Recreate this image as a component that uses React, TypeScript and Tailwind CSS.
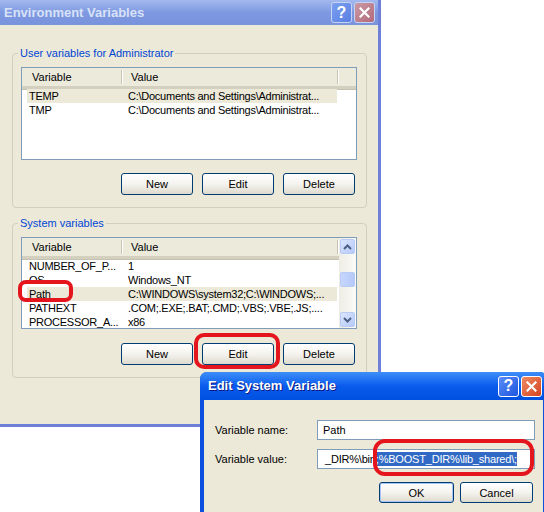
import React from 'react';
import { clsx, type ClassValue } from 'clsx';
import { twMerge } from 'tailwind-merge';

function cn(...inputs: ClassValue[]) {
  return twMerge(clsx(inputs));
}

type Row = { name: string; value: string };

const userRows: Row[] = [
  { name: 'TEMP', value: 'C:\\Documents and Settings\\Administrat...' },
  { name: 'TMP', value: 'C:\\Documents and Settings\\Administrat...' },
];

const systemRows: Row[] = [
  { name: 'NUMBER_OF_P...', value: '1' },
  { name: 'OS', value: 'Windows_NT' },
  { name: 'Path', value: 'C:\\WINDOWS\\system32;C:\\WINDOWS;...' },
  { name: 'PATHEXT', value: '.COM;.EXE;.BAT;.CMD;.VBS;.VBE;.JS;....' },
  { name: 'PROCESSOR_A...', value: 'x86' },
];

export default function App() {
  return (
    <div className="relative w-[544px] h-[512px] overflow-hidden bg-white text-[11px] leading-[14px] text-black font-['Liberation_Sans',Arial,sans-serif]">
      {/* Environment Variables (inactive) */}
      <div className="absolute left-0 top-0 w-[381px] h-[427px] flex flex-col bg-[#ece9d8] border-r-[3px] border-b-[3px] border-[#6f80d8]">
        <div className="h-[25px] shrink-0 flex items-center bg-linear-to-b from-[#a3b9ee] via-[#7e99e1] to-[#7893dd] pl-[4px] pr-[3px]">
          <span className="flex-1 text-[13px] font-bold text-[#d8e2f7]">Environment Variables</span>
          <div className="flex gap-[2px]">
            <TitleButton kind="help" active={false} />
            <TitleButton kind="close" active={false} />
          </div>
        </div>

        <div className="flex-1 flex flex-col pl-[12px] pr-[11px] pt-[22px]">
          <GroupBox title="User variables for Administrator">
            <ListView rows={userRows} selected={0} className="h-[93px] mt-[7px]" />
            <ButtonRow className="mt-[13px] mb-[12px]" />
          </GroupBox>

          <GroupBox title="System variables" className="mt-[9px]">
            <ListView rows={systemRows} selected={2} scroll className="h-[92px] mt-[7px]" />
            <ButtonRow className="mt-[14px] mb-[12px]" />
          </GroupBox>
        </div>
      </div>

      {/* Edit System Variable (active) */}
      <div className="absolute left-[200px] top-[372px] w-[347px] h-[142px] flex flex-col bg-[#0a4fde] rounded-t-[7px] overflow-hidden">
        <div className="h-[28px] shrink-0 flex items-center bg-linear-to-b from-[#3d8ef8] via-[#0a5bee] to-[#0051e0] pl-[8px] pr-[5px]">
          <span className="flex-1 text-[13px] font-bold text-white [text-shadow:1px_1px_0_#0a1883]">Edit System Variable</span>
          <div className="flex gap-[2px]">
            <TitleButton kind="help" active />
            <TitleButton kind="close" active />
          </div>
        </div>
        <div className="flex-1 mx-[4px] bg-[#ece9d8] pl-[11px] pr-[8px] pt-[20px] flex flex-col">
          <div className="flex items-center h-[20px]">
            <span className="w-[102px]">Variable name:</span>
            <div className="w-[218px] h-[20px] border border-[#7f9db9] bg-white flex items-center pl-[5px]">Path</div>
          </div>
          <div className="flex items-center h-[20px] mt-[9px]">
            <span className="w-[102px]">Variable value:</span>
            <div className="w-[218px] h-[20px] border border-[#7f9db9] bg-white flex items-center pl-[7px] overflow-hidden whitespace-nowrap tracking-[-0.2px]">
              <span className="shrink-0">_DIR%\bin</span>
              <span className="shrink-0 bg-[#316ac5] text-white">;%BOOST_DIR%\lib_shared\;</span>
            </div>
          </div>
          <div className="flex justify-end gap-[6px] mt-[13px] pr-[2px]">
            <XpButton label="OK" className="w-[75px] h-[21px]" focused />
            <XpButton label="Cancel" className="w-[73px] h-[21px]" />
          </div>
        </div>
      </div>

      {/* red annotations */}
      <div className="absolute left-[18px] top-[280px] w-[55px] h-[22px] border-[4px] border-[#e5151d] rounded-[8px]" />
      <div className="absolute left-[194px] top-[333px] w-[86px] h-[36px] border-[4px] border-[#e5151d] rounded-[10px]" />
      <div className="absolute left-[373px] top-[439px] w-[161px] h-[37px] border-[4px] border-[#e5151d] rounded-[12px]" />
    </div>
  );
}

function GroupBox({ title, children, className }: { title: string; children: React.ReactNode; className?: string }) {
  return (
    <fieldset className={cn('border border-[#d0d0bf] rounded-[4px] px-[8px] flex flex-col', className)}>
      <legend className="ml-[-3px] px-[2px] leading-[13px] text-[#0046d5]">{title}</legend>
      {children}
    </fieldset>
  );
}

function ListView({ rows, selected, scroll, className }: { rows: Row[]; selected: number; scroll?: boolean; className?: string }) {
  return (
    <div className={cn('w-[336px] border border-[#7f9db9] bg-white flex overflow-hidden', className)}>
      <div className="flex-1 min-w-0 flex flex-col">
        <div className="h-[21px] shrink-0 flex items-center bg-[#ebeadb] border-b-[3px] border-[#d4d0c0] shadow-[0_1px_0_#c5c1b1]">
          <span className="w-[99px] pl-[10px]">Variable</span>
          <HeaderDivider />
          <span className="w-[214px] pl-[8px]">Value</span>
          <HeaderDivider />
          <span className="flex-1" />
        </div>
        {rows.map((r, i) => (
          <div
            key={r.name}
            className={cn(
              'ml-[5px] w-[310px] h-[14px] flex items-center whitespace-nowrap tracking-[-0.25px]',
              i === selected && 'bg-[#ece9d8]'
            )}
          >
            <span className="w-[101px] pl-[2px] overflow-hidden">{r.name}</span>
            <span className="flex-1 overflow-hidden">{r.value}</span>
          </div>
        ))}
      </div>
      {scroll && <Scrollbar />}
    </div>
  );
}

function HeaderDivider() {
  return <span className="w-[2px] h-[14px] border-l border-[#c7c3b3] border-r border-r-white" />;
}

function Scrollbar() {
  return (
    <div className="w-[17px] h-full flex flex-col bg-linear-to-r from-[#eeede5] to-[#fbfbf8]">
      <ScrollButton dir="up" />
      <div className="flex-1 relative">
        <div className="absolute left-[1px] right-[1px] top-[17px] h-[15px] rounded-[2px] border border-[#b8cbf5] bg-linear-to-r from-[#c6d6fc] to-[#b5c9f8]" />
      </div>
      <ScrollButton dir="down" />
    </div>
  );
}

function ScrollButton({ dir }: { dir: 'up' | 'down' }) {
  return (
    <div className="h-[17px] p-[1px]">
      <div className="w-full h-full rounded-[2px] border border-[#b8cbf5] bg-linear-to-br from-[#dbe5fd] to-[#b6c9f8] flex items-center justify-center">
        <svg width="9" height="6" viewBox="0 0 9 6">
          <path
            d={dir === 'up' ? 'M1 5 L4.5 1.5 L8 5' : 'M1 1 L4.5 4.5 L8 1'}
            fill="none"
            stroke="#4d6185"
            strokeWidth="2"
          />
        </svg>
      </div>
    </div>
  );
}

function ButtonRow({ className }: { className?: string }) {
  return (
    <div className={cn('flex justify-end gap-[9px] pr-[3px]', className)}>
      <XpButton label="New" />
      <XpButton label="Edit" />
      <XpButton label="Delete" />
    </div>
  );
}

function XpButton({ label, className, focused }: { label: string; className?: string; focused?: boolean }) {
  return (
    <div
      className={cn(
        'w-[72px] h-[22px] flex items-center justify-center rounded-[3px] border border-[#003c74] bg-linear-to-b from-white via-[#f4f3ee] to-[#dedace] text-black',
        focused && 'shadow-[inset_0_0_0_1px_#a8c4f2]',
        className
      )}
    >
      {label}
    </div>
  );
}

function TitleButton({ kind, active }: { kind: 'help' | 'close'; active: boolean }) {
  const bg =
    kind === 'help'
      ? active
        ? 'bg-linear-to-br from-[#5a8cf7] to-[#1c54e0]'
        : 'bg-linear-to-br from-[#7aa0f0] to-[#5a7fe2]'
      : active
        ? 'bg-linear-to-br from-[#ec8a62] to-[#d6401c]'
        : 'bg-linear-to-br from-[#c99aa6] to-[#b46a7a]';
  return (
    <div
      className={cn(
        'w-[21px] h-[21px] rounded-[3px] flex items-center justify-center',
        active ? 'border border-white' : 'border border-[#c6d3f3]',
        bg
      )}
    >
      {kind === 'help' ? (
        <span className="text-[16px] leading-none font-bold text-white">?</span>
      ) : (
        <svg width="11" height="11" viewBox="0 0 11 11">
          <path d="M1.5 1.5 L9.5 9.5 M9.5 1.5 L1.5 9.5" stroke="white" strokeWidth="2.2" strokeLinecap="square" />
        </svg>
      )}
    </div>
  );
}
